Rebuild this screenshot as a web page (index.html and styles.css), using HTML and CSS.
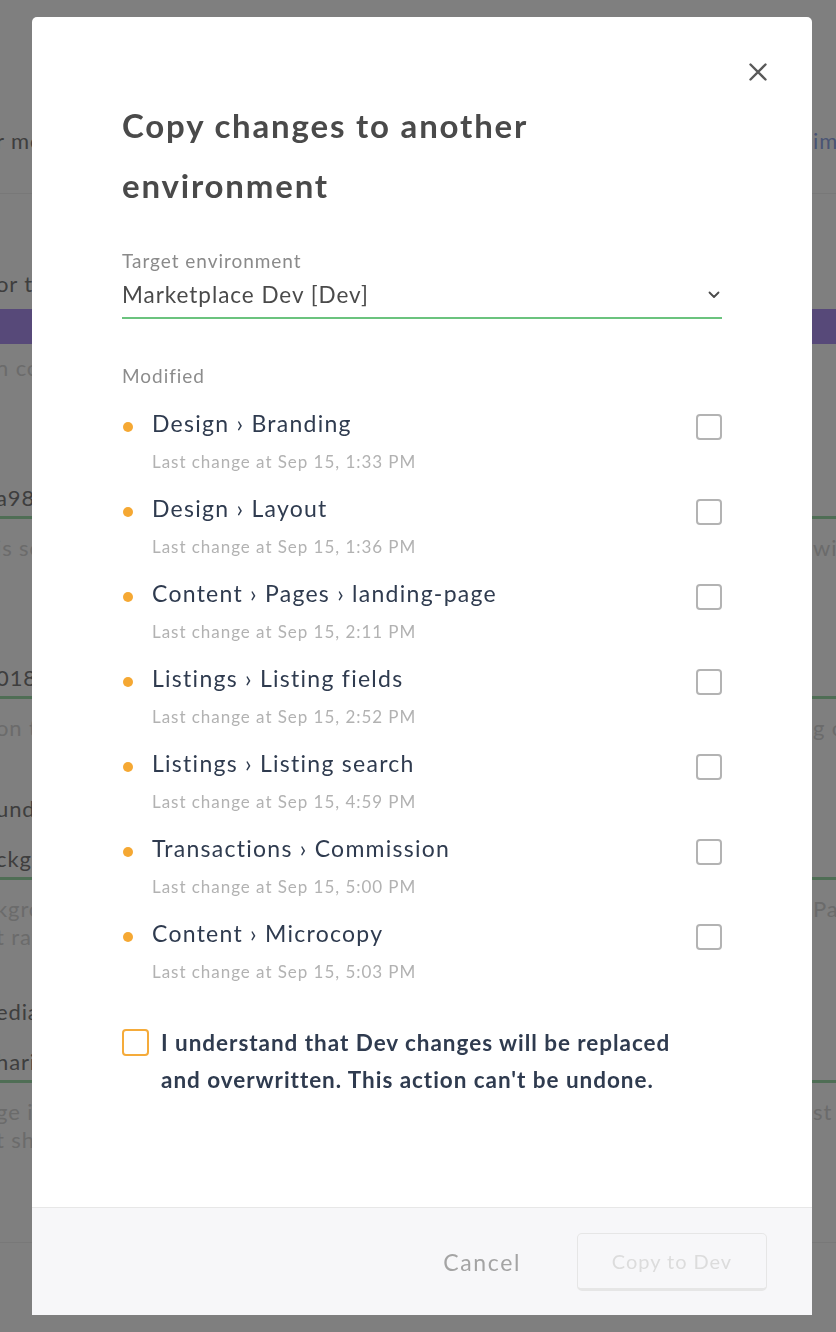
FILE: index.html
```html
<!DOCTYPE html>
<html lang="en">
<head>
<meta charset="utf-8">
<title>Copy changes to another environment</title>
<link rel="stylesheet" href="styles.css">
</head>
<body>
<div class="page">
  <div class="bg-row h-head"><span class="l dark">r more</span><span class="r blue">images</span></div>
  <div class="bg-divider"></div>
  <div class="bg-row h-or"><span class="l dark">or the</span></div>
  <div class="bg-band"></div>
  <div class="bg-row h-t1"><span class="l faint">n content</span></div>
  <div class="bg-field">
    <div class="bg-row h-val"><span class="l dark">a98f2</span></div>
    <div class="bg-line"></div>
    <div class="bg-row h-help"><span class="l faint">is se</span><span class="r faint">will</span></div>
  </div>
  <div class="bg-field f2">
    <div class="bg-row h-val"><span class="l dark">018c4</span></div>
    <div class="bg-line"></div>
    <div class="bg-row h-help"><span class="l faint">on t</span><span class="r faint">g on</span></div>
  </div>
  <div class="bg-field f3">
    <div class="bg-row h-lab"><span class="l dark">und</span></div>
    <div class="bg-row h-val"><span class="l dark">ckgr</span></div>
    <div class="bg-line"></div>
    <div class="bg-row h-help"><span class="l faint">kgrou</span><span class="r faint">Pass</span></div>
    <div class="bg-row h-help2"><span class="l faint">t rat</span></div>
  </div>
  <div class="bg-field f4">
    <div class="bg-row h-lab"><span class="l dark">edia</span></div>
    <div class="bg-row h-val"><span class="l dark">harin</span></div>
    <div class="bg-line"></div>
    <div class="bg-row h-help"><span class="l faint">ge is</span><span class="r faint">st c</span></div>
    <div class="bg-row h-help2"><span class="l faint">t sho</span></div>
  </div>
  <div class="bg-bottom"></div>
</div>

<div class="overlay"></div>

<div class="modal" role="dialog" aria-labelledby="modal-title">
  <button class="close" aria-label="Close">
    <svg width="18" height="18" viewBox="0 0 18 18"><path d="M1.5 1.5 L16.5 16.5 M16.5 1.5 L1.5 16.5" stroke="#595959" stroke-width="2.4" stroke-linecap="round" fill="none"/></svg>
  </button>
  <div class="modal-body">
    <h1 id="modal-title" class="title">Copy changes to another environment</h1>

    <div class="field">
      <div class="field-label">Target environment</div>
      <div class="select">
        <span class="select-value">Marketplace Dev [Dev]</span>
        <svg class="chevron" width="12" height="8" viewBox="0 0 12 8"><path d="M1.5 1.5 L6 6 L10.5 1.5" stroke="#4a4a4a" stroke-width="1.8" fill="none" stroke-linecap="round" stroke-linejoin="round"/></svg>
      </div>
    </div>

    <div class="section-label">Modified</div>
    <ul class="changes">
      <li class="change"><span class="dot"></span><div class="change-text"><div class="change-title">Design › Branding</div><div class="change-meta">Last change at Sep 15, 1:33 PM</div></div><span class="box"></span></li>
      <li class="change"><span class="dot"></span><div class="change-text"><div class="change-title">Design › Layout</div><div class="change-meta">Last change at Sep 15, 1:36 PM</div></div><span class="box"></span></li>
      <li class="change"><span class="dot"></span><div class="change-text"><div class="change-title">Content › Pages › landing-page</div><div class="change-meta">Last change at Sep 15, 2:11 PM</div></div><span class="box"></span></li>
      <li class="change"><span class="dot"></span><div class="change-text"><div class="change-title">Listings › Listing fields</div><div class="change-meta">Last change at Sep 15, 2:52 PM</div></div><span class="box"></span></li>
      <li class="change"><span class="dot"></span><div class="change-text"><div class="change-title">Listings › Listing search</div><div class="change-meta">Last change at Sep 15, 4:59 PM</div></div><span class="box"></span></li>
      <li class="change"><span class="dot"></span><div class="change-text"><div class="change-title">Transactions › Commission</div><div class="change-meta">Last change at Sep 15, 5:00 PM</div></div><span class="box"></span></li>
      <li class="change"><span class="dot"></span><div class="change-text"><div class="change-title">Content › Microcopy</div><div class="change-meta">Last change at Sep 15, 5:03 PM</div></div><span class="box"></span></li>
    </ul>

    <label class="confirm"><span class="confirm-box"></span><span class="confirm-text">I understand that Dev changes will be replaced and overwritten. This action can't be undone.</span></label>
  </div>
  <div class="modal-footer">
    <button class="btn-cancel">Cancel</button>
    <button class="btn-primary" disabled>Copy to Dev</button>
  </div>
</div>
</body>
</html>
```

FILE: styles.css
```css
* { box-sizing: border-box; }
html, body { margin: 0; padding: 0; }
body {
  width: 836px;
  height: 1332px;
  overflow: hidden;
  font-family: "Lato", "Noto Sans", sans-serif;
  letter-spacing: 0.06em;
  background: #ffffff;
}

/* background page */
.page {
  width: 836px;
  height: 1332px;
  padding-top: 124px;
  font-size: 22px;
  letter-spacing: 0.04em;
}
.bg-row {
  display: flex;
  justify-content: space-between;
  align-items: center;
  white-space: nowrap;
  overflow: hidden;
}
.bg-row .l { margin-left: -4px; }
.bg-row .r { margin-left: auto; width: 24px; overflow: hidden; padding-left: 1px; }
.dark { color: #7c7c7c; }
.faint { color: #d6d6d6; }
.blue { color: #93a9e8; }
.h-head { height: 32px; }
.bg-divider { margin-top: 37px; border-top: 1px solid #f0f0f0; }
.h-or { height: 32px; margin-top: 73px; }
.bg-band { height: 35px; margin-top: 10px; background: #ae93f3; }
.h-t1 { height: 26px; margin-top: 10px; }
.bg-field { margin-top: 103px; }
.bg-field.f2 { margin-top: 103px; }
.bg-field.f3 { margin-top: 54px; }
.bg-field.f4 { margin-top: 48px; }
.h-val { height: 28px; }
.h-lab { height: 28px; margin-bottom: 22px; }
.bg-line { margin-top: 5px; height: 3px; background: #9edcab; }
.h-help { height: 26px; margin-top: 15px; }
.h-help2 { height: 26px; margin-top: 2px; }
.bg-bottom { margin-top: 90px; border-top: 1px solid #f0f0f0; height: 120px; }

.overlay {
  position: fixed;
  inset: 0;
  background: rgba(0, 0, 0, 0.5);
}

/* modal */
.modal {
  position: fixed;
  left: 32px;
  top: 17px;
  width: 780px;
  height: 1298px;
  background: #ffffff;
  border-radius: 5px 5px 0 0;
  display: flex;
  flex-direction: column;
  overflow: hidden;
}
.close {
  position: absolute;
  right: 45px;
  top: 46px;
  width: 18px;
  height: 18px;
  padding: 0;
  border: 0;
  background: none;
  display: flex;
}
.modal-body {
  flex: 1;
  padding: 78px 90px 0 90px;
}
.title {
  margin: 0;
  font-size: 33px;
  line-height: 60px;
  font-weight: 700;
  color: #4a4a4a;
  letter-spacing: 0.055em;
  width: 470px;
}
.field { margin-top: 34px; }
.field-label {
  font-size: 19px;
  line-height: 24px;
  color: #8a8a8a;
}
.select {
  margin-top: 8px;
  display: flex;
  align-items: center;
  justify-content: space-between;
  padding-bottom: 8px;
  border-bottom: 2px solid #6bc37e;
}
.select-value {
  font-size: 22.5px;
  line-height: 28px;
  color: #4a4a4a;
}
.chevron { margin-right: 2px; }
.section-label {
  margin-top: 45px;
  font-size: 19px;
  line-height: 24px;
  color: #8c8c8c;
}
.changes {
  list-style: none;
  margin: 20px 0 0 0;
  padding: 0;
  display: flex;
  flex-direction: column;
  gap: 19px;
}
.change {
  display: flex;
  align-items: flex-start;
}
.dot {
  width: 10px;
  height: 10px;
  border-radius: 50%;
  background: #f5a833;
  margin: 14px 19px 0 1px;
  flex: none;
}
.change-text { flex: 1; }
.change-title {
  font-size: 23px;
  line-height: 30px;
  color: #2f3b4f;
  letter-spacing: 0.055em;
}
.change-meta {
  margin-top: 12px;
  font-size: 17px;
  line-height: 24px;
  color: #b2b2b2;
}
.box {
  flex: none;
  width: 26px;
  height: 26px;
  margin-top: 6px;
  border: 2px solid #b3b3b3;
  border-radius: 4px;
}
.confirm {
  margin-top: 40px;
  display: flex;
  align-items: flex-start;
  gap: 12px;
}
.confirm-box {
  flex: none;
  width: 27px;
  height: 27px;
  margin-top: 5px;
  border: 2px solid #f5ab3a;
  border-radius: 4px;
}
.confirm-text {
  font-size: 22.5px;
  line-height: 37px;
  font-weight: 700;
  color: #2f3b4f;
  width: 545px;
}
.modal-footer {
  flex: none;
  height: 108px;
  border-top: 1px solid #e7e7e7;
  background: #f7f7f9;
  display: flex;
  align-items: center;
  justify-content: flex-end;
  padding-right: 45px;
  gap: 56px;
}
.btn-cancel {
  border: 0;
  background: none;
  padding: 0;
  font-family: inherit;
  letter-spacing: 0.07em;
  font-size: 23px;
  color: #a4a4a4;
}
.btn-primary {
  width: 190px;
  height: 58px;
  border: 1px solid #e6e6e6;
  border-bottom-width: 3px;
  border-radius: 5px;
  background: #f7f7f9;
  font-family: inherit;
  letter-spacing: inherit;
  font-size: 20px;
  color: #dcdcdc;
  padding: 0;
}
```
